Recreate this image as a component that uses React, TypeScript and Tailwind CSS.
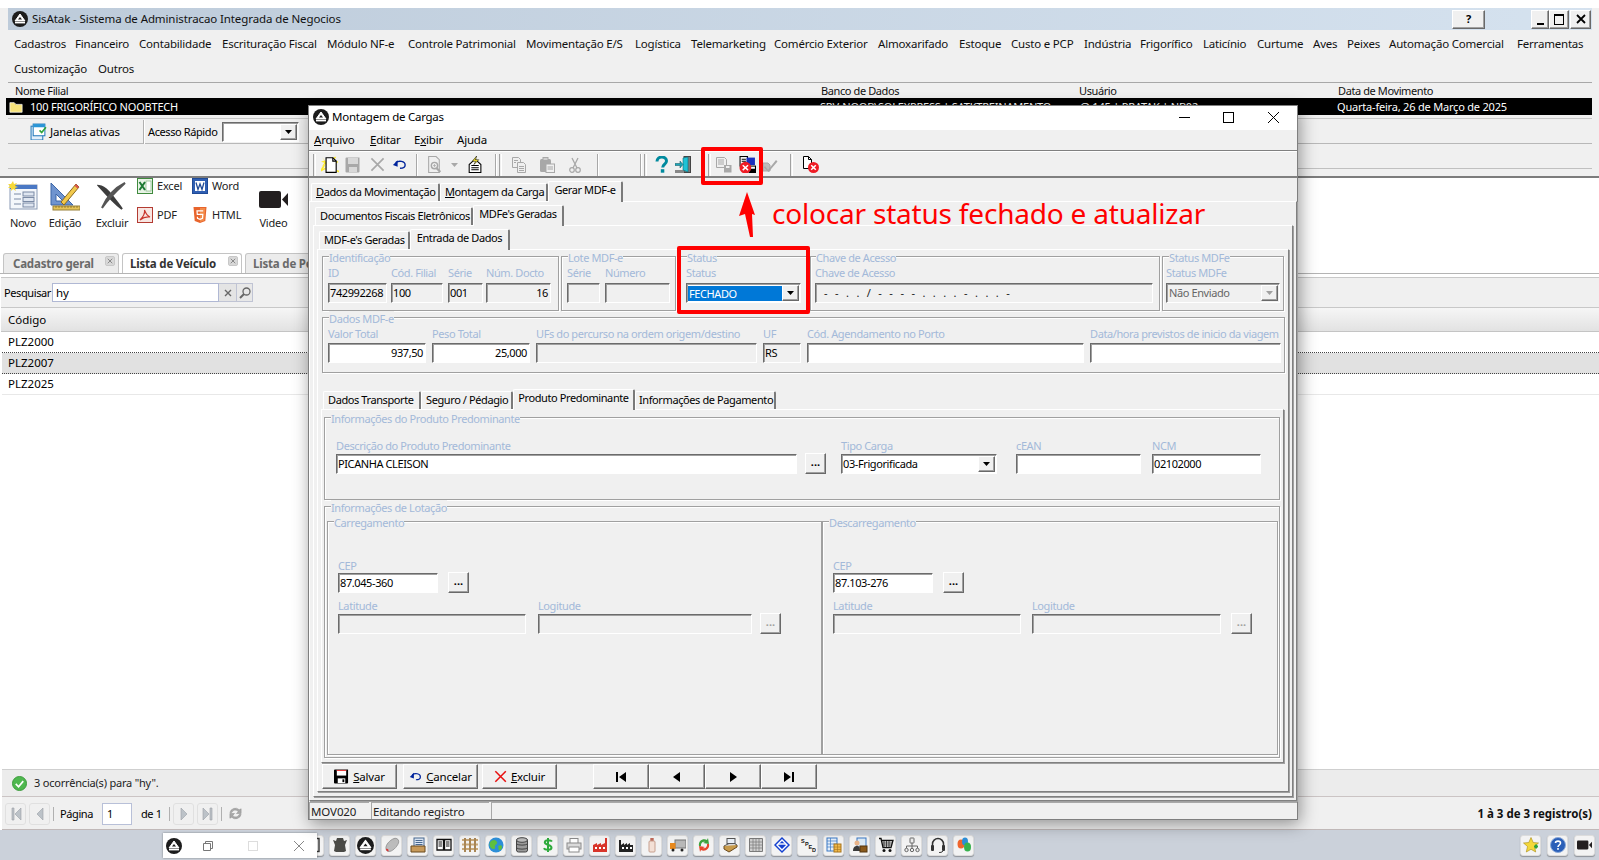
import React from 'react';

type P = { className?: string; children?: React.ReactNode };

const S = ({ className = 'w-4 h-4', children, v = '0 0 16 16' }: P & { v?: string }) => (
  <svg viewBox={v} className={`block shrink-0 ${className}`}>{children}</svg>
);

const Logo = ({ className = 'w-4 h-4' }: P) => (
  <S className={className}>
    <circle cx="8" cy="8" r="8" fill="#1c1c1c" />
    <path d="M8 3 L13 10 H3 Z" fill="#fff" stroke="#fff" strokeLinejoin="round" />
    <path d="M8 6 L10 8.6 H6 Z" fill="#1c1c1c" />
    <rect x="3" y="11" width="10" height="1.4" fill="#fff" />
  </S>
);

/* ---------- ribbon icons ---------- */
const NovoIcon = () => (
  <S v="0 0 30 30" className="w-[30px] h-[30px]">
    <rect x="2" y="4" width="27" height="24" fill="#f4f7fb" stroke="#8a9ab5" />
    <rect x="2" y="4" width="27" height="4" fill="#4a78c4" />
    <path d="M6 13h7M6 18h7M6 23h7" stroke="#7a8aa5" />
    <rect x="15" y="11" width="11" height="4" fill="#dfe6f1" stroke="#7a8aa5" />
    <rect x="15" y="16.500" width="11" height="4" fill="#dfe6f1" stroke="#7a8aa5" />
    <rect x="15" y="22" width="11" height="4" fill="#dfe6f1" stroke="#7a8aa5" />
    <path d="M5 0l1 3 3-1-2 3 3 1-3 1 1 3-3-2-2 2 0-3-3 0 2-2-2-2 3 0z" fill="#f6d93a" />
  </S>
);
const EdicaoIcon = () => (
  <S v="0 0 30 30" className="w-[30px] h-[30px]">
    <path d="M1 2 L1 24 L23 24 Z" fill="#6f94cf" stroke="#3d67a8" />
    <path d="M6 13 L6 20 L13 20 Z" fill="#fff" stroke="#3d67a8" />
    <path d="M11 21 L26 3 L29 6 L14 24 Z" fill="#f2c94c" stroke="#8a6a20" />
    <path d="M26 3 L29 6 L27.500 7.500 L24.500 4.800 Z" fill="#d9534f" />
    <rect x="3" y="25" width="27" height="4" fill="#e6c458" stroke="#97803a" />
    <path d="M6 25v2M9 25v2M12 25v2M15 25v2M18 25v2M21 25v2M24 25v2M27 25v2" stroke="#7a6520" strokeWidth=".7" />
  </S>
);
const ExcluirIcon = () => (
  <S v="0 0 30 30" className="w-[30px] h-[30px]">
    <path d="M2 5 C10 6 16 16 25 28 C17 22 10 14 2 5Z" fill="#3d3d3d" stroke="#3d3d3d" strokeWidth="2" />
    <path d="M28 2 C18 7 10 15 5 27 C9 21 17 12 28 2Z" fill="#6a6a6a" stroke="#555" strokeWidth="2" />
  </S>
);
const ExcelIcon = () => (
  <S className="w-4 h-4">
    <rect x=".5" y=".5" width="15" height="15" fill="#e8f3e6" stroke="#3f8a3d" />
    <rect x="9" y="3" width="5" height="10" fill="#fff" stroke="#6aa96a" strokeWidth=".6" />
    <path d="M2.500 4l5.500 8M8 4l-5.500 8" stroke="#1e7a35" strokeWidth="2" />
  </S>
);
const WordIcon = () => (
  <S className="w-4 h-4">
    <rect x=".5" y=".5" width="15" height="15" fill="#2f5fb3" stroke="#1f4a96" />
    <rect x="3" y="3" width="10" height="10" fill="#fff" />
    <path d="M4 4.500l2 7 2-5.500 2 5.500 2-7" stroke="#1f4a96" strokeWidth="1.300" fill="none" />
  </S>
);
const PdfIcon = () => (
  <S className="w-4 h-4">
    <rect x=".5" y=".5" width="15" height="15" fill="#f8e6e2" stroke="#b33b32" />
    <path d="M3 13 C6 10 8 6 7.500 3 C9 7 10.500 9 13 10 C9 9.500 6 10.500 3 13Z" fill="none" stroke="#c9342c" strokeWidth="1.100" />
  </S>
);
const HtmlIcon = () => (
  <S className="w-4 h-4">
    <path d="M1.500 0h13l-1.200 14L8 16l-5.300-2z" fill="#e8642c" />
    <path d="M8 1v14l4.300-1.600L13.300 1z" fill="#f28b4a" />
    <path d="M11.200 3.800H5l.3 3.500h5.500l-.3 4L8 12.300l-2.500-1-.1-1.500" fill="none" stroke="#fff" strokeWidth="1.200" />
  </S>
);
const VideoIcon = ({ className = 'w-[29px] h-[17px]' }: P) => (
  <S v="0 0 29 17" className={className}>
    <rect x="0" y="0" width="22" height="17" rx="2" fill="#231f20" />
    <path d="M23 8.500 L29 2 V15 Z" fill="#231f20" />
  </S>
);

/* ---------- toolbar icons ---------- */
const GR = '#a8a8a8';
const NewIco = () => (
  <S className="w-[18px] h-[18px]">
    <path d="M1 1l2 3-3 1 3 1-2 3 3-2 1 3 1-3" fill="#ffec2e" />
    <path d="M3 8L0 13l4-2M13 1l-3 2M15 5l-2 1M14 13l2 1" stroke="#ffec2e" strokeWidth="1.400" fill="none" />
    <path d="M4.500 1.500h6l3 3v10h-9z" fill="#fff" stroke="#000" />
    <path d="M10.500 1.500v3h3" fill="none" stroke="#000" />
  </S>
);
const SaveGrey = () => (
  <S className="w-4 h-4">
    <path d="M.5 1.500a1 1 0 0 1 1-1h13v14a1 1 0 0 1-1 1h-12a1 1 0 0 1-1-1z" fill={GR} />
    <rect x="3" y="1" width="10" height="6" fill="#d8d8d8" />
    <rect x="4" y="10" width="8" height="5" fill="#d8d8d8" />
  </S>
);
const XGrey = () => (
  <S className="w-[15px] h-[15px]">
    <path d="M1.500 1.500l13 13M14.500 1.500l-13 13" stroke={GR} strokeWidth="1.800" />
  </S>
);
const UndoIco = ({ className = 'w-[15px] h-[15px]' }: P) => (
  <S className={className}>
    <path d="M4 6 C7 3.500 14 4 14 8.500 C14 11 11.500 12 8.500 12" fill="none" stroke="#00249c" strokeWidth="1.500" />
    <path d="M1 8.500L6 3.500V10.500Z" fill="#00249c" />
  </S>
);
const PreviewGrey = () => (
  <S className="w-[17px] h-[17px]">
    <path d="M2.500 .5h7l3 3v12h-10z" fill="#f0f0f0" stroke={GR} />
    <circle cx="8" cy="9" r="3" fill="none" stroke={GR} strokeWidth="1.300" />
    <path d="M10 11.500l3.500 3.500" stroke={GR} strokeWidth="2" />
    <path d="M8 7.500v3M6.500 9h3" stroke={GR} strokeWidth=".7" />
  </S>
);
const ArrowGrey = () => (
  <S v="0 0 7 4" className="w-[7px] h-[4px]">
    <path d="M0 0h7L3.500 4z" fill={GR} />
  </S>
);
const DocBolt = () => (
  <S className="w-[17px] h-[17px]">
    <path d="M3 15.500V8L8.500 3 14 8v7.500z" fill="#fff" stroke="#000" />
    <path d="M5 9h7M5 11h7M5 13h7" stroke="#000" />
    <path d="M10 0L6 5h3L7.500 8l4.500-4.500H9z" fill="#ffec2e" stroke="#000" strokeWidth=".5" />
  </S>
);
const CopyGrey = () => (
  <S className="w-[16px] h-[16px]">
    <path d="M1.500 .5h6l2 2v8h-8z" fill="#efefef" stroke={GR} />
    <path d="M6.500 5.500h6l2 2v8h-8z" fill="#efefef" stroke={GR} />
    <path d="M3 3.500h4M3 5.500h2M8 9.500h5M8 11.500h5M8 13.500h5" stroke={GR} />
  </S>
);
const PasteGrey = () => (
  <S className="w-[16px] h-[16px]">
    <rect x="1" y="2" width="11" height="13" rx="1.500" fill={GR} />
    <rect x="4" y=".5" width="5" height="3" fill="#cfcfcf" stroke={GR} />
    <rect x="7" y="7" width="8.500" height="8.500" fill="#f0f0f0" stroke={GR} />
    <path d="M8.500 10h5.500M8.500 12h5.500" stroke={GR} />
  </S>
);
const CutGrey = () => (
  <S className="w-[12px] h-[16px]" v="0 0 12 16">
    <path d="M3 1l5 10M9 1L4 11" stroke={GR} strokeWidth="1.300" />
    <circle cx="3" cy="13" r="2.300" fill="none" stroke={GR} strokeWidth="1.200" />
    <circle cx="9" cy="13" r="2.300" fill="none" stroke={GR} strokeWidth="1.200" />
  </S>
);
const HelpIco = () => (
  <S className="w-[15px] h-[17px]" v="0 0 15 17">
    <path d="M3 5.500C3 2.500 5.500 1 7.800 1 10.500 1 12.500 2.800 12.500 5c0 3-3.800 3.200-3.800 6.500" fill="none" stroke="#008a9e" strokeWidth="3" />
    <rect x="6.800" y="13.200" width="3.500" height="3.500" fill="#008a9e" />
  </S>
);
const ExitIco = () => (
  <S className="w-[16px] h-[17px]" v="0 0 16 17">
    <rect x="9" y=".5" width="6.500" height="16" fill="#7a7a7a" stroke="#444" />
    <rect x="0" y="14" width="9" height="3" fill="#888" />
    <path d="M8 2l5-1v15l-5-2z" fill="#1fc2d6" stroke="#0a6b78" strokeWidth=".6" />
    <path d="M0 7.500h5V5l3 3.500L5 12V9.500H0z" fill="#1fa5b8" stroke="#08545f" strokeWidth=".5" />
  </S>
);
const DocsGrey = () => (
  <S className="w-[16px] h-[16px]">
    <path d="M.5 .5h8l2 2v8h-10z" fill="#efefef" stroke={GR} />
    <path d="M2 3h6M2 5h6M2 7h6" stroke={GR} />
    <rect x="8" y="8" width="7.500" height="7.500" fill={GR} />
    <rect x="10" y="9" width="3.500" height="2" fill="#eee" />
  </S>
);
const DocsRed = () => (
  <S className="w-[17px] h-[17px]">
    <rect x="1" y=".5" width="7" height="9" fill="#fff" stroke="#000" />
    <path d="M2.500 3h4M2.500 5h4" stroke="#000" />
    <rect x="7" y="1.500" width="8" height="7" fill="#1a2fbe" />
    <rect x="9" y="9" width="7.500" height="7.500" fill="#000" />
    <rect x="11" y="10" width="4" height="2" fill="#fff" />
    <circle cx="6" cy="11" r="5.500" fill="#ee1c25" />
    <path d="M3.500 8.700l5 4.600M8.500 8.700l-5 4.600" stroke="#fff" strokeWidth="1.400" />
  </S>
);
const CheckGrey = () => (
  <S className="w-[16px] h-[16px]">
    <path d="M1 6h5l2 2v6H1z" fill="#bdbdbd" stroke={GR} />
    <path d="M3 9l3 4 8-10 1.500 1.500L6.500 15 2 10.500z" fill={GR} />
  </S>
);
const DocX = () => (
  <S className="w-[17px] h-[17px]" v="0 0 17 17">
    <path d="M1.500 .5h5l3 3v9h-8z" fill="#fff" stroke="#000" />
    <path d="M6.500 .5v3h3" fill="none" stroke="#000" />
    <circle cx="11.500" cy="11.500" r="5.500" fill="#ee1c25" />
    <path d="M9.200 9.200l4.600 4.600M13.800 9.200l-4.600 4.600" stroke="#fff" strokeWidth="1.500" />
  </S>
);
const Grip = () => <div className="w-[3px] h-[22px] border-l border-l-[#a0a0a0] border-r border-r-white shrink-0" />;
const Sep = () => <div className="w-[2px] h-[22px] border-l border-l-[#a8a8a8] border-r border-r-white shrink-0" />;

/* ---------- taskbar icons ---------- */
const TB: React.ReactNode[] = [
  <S key="0"><rect x="3" y="1.500" width="10" height="13" fill="none" stroke="#333" strokeWidth="1.400" /></S>,
  <S key="1"><path d="M1 3l3 1 1-3h6l1 3 3-1-2 5 1 6-2 1H4l-2-1 1-6z" fill="#4a4a46" /></S>,
  <Logo key="2" className="w-[17px] h-[17px]" />,
  <S key="3"><path d="M2 12C1 8 6 3 10 1.500 13 .5 15.500 3 14.500 6 13 10 8 15 4.500 14.500 3 14.300 2.300 13.300 2 12z" fill="#bcbcbc" stroke="#777" strokeWidth=".6" /><path d="M2 12c0 1.300 1.200 2.500 2.500 2.500.3-2-.7-3-2.500-2.500z" fill="#d33" /></S>,
  <S key="4"><rect x="4" y="1" width="10" height="10" fill="#dbe6f4" stroke="#4a6a92" /><path d="M5.500 3.500h7M5.500 5.500h7M5.500 7.500h7" stroke="#4a6a92" /><path d="M1 9h14v6H1z" fill="#c89a5a" stroke="#6b4a1e" /></S>,
  <S key="5"><path d="M1 2.500h6.500v10.500H1zM8.500 2.500H15v10.500H8.500z" fill="#fff" stroke="#111" strokeWidth="1.300" /><path d="M2.500 5h3.500M2.500 7h3.500M2.500 9h3.500M10 5h3.500M10 7h3.500M10 9h3.500" stroke="#111" /></S>,
  <S key="6"><path d="M0 3h16M0 7.500h16M0 12h16" stroke="#c8a878" strokeWidth="2.200" /><path d="M3 1v14M8 1v14M13 1v14" stroke="#a98655" strokeWidth="2" /></S>,
  <S key="7"><circle cx="8" cy="8" r="7.500" fill="#2d8fd8" /><path d="M3 4c3-2 5-1 6 1S6 8 7 10s-2 3-4 1-2-5 0-7zM10 9c2-1 4-1 4 1s-2 4-3 3 0-2-1-4z" fill="#5fbf3e" /></S>,
  <S key="8"><rect x="2.500" y="2" width="11" height="13" rx="2" fill="#9a9a9a" stroke="#444" /><ellipse cx="8" cy="3" rx="5.500" ry="2.300" fill="#bbb" stroke="#444" /><path d="M2.500 7c2 1.500 9 1.500 11 0M2.500 11c2 1.500 9 1.500 11 0" stroke="#444" fill="none" /></S>,
  <S key="9"><path d="M12 4.500C11 3 5 2.500 4.800 5.300 4.600 8 11.500 7.500 11.500 10.700 11.500 13.500 5 13.300 3.800 11.300M8 1v14" stroke="#2eaa3c" strokeWidth="2" fill="none" /></S>,
  <S key="10"><rect x="4" y="1.500" width="8" height="5" fill="#fff" stroke="#8a8a8a" /><rect x="1" y="6" width="14" height="6" fill="#dadada" stroke="#8a8a8a" /><rect x="3" y="10" width="10" height="5" fill="#fff" stroke="#8a8a8a" /></S>,
  <S key="11"><path d="M1 15V8l4-2v2l4-2v2l4-2V1h2v14z" fill="#d8352a" /><path d="M3 11h2M7 11h2M11 11h2" stroke="#fff" strokeWidth="2" /></S>,
  <S key="12"><path d="M1 15V3h2v5l3-2v2l3-2v2l3-2v2h3v7z" fill="#222" /><path d="M4 11h2M8 11h2M12 11h2" stroke="#fff" strokeWidth="2" /></S>,
  <S key="13"><rect x="6.300" y="1" width="3.400" height="3" fill="#c06a5a" /><rect x="5" y="4" width="6" height="11" rx="1" fill="#f3e0d6" stroke="#c7a08f" /></S>,
  <S key="14"><rect x="5" y="3" width="11" height="8" fill="#b8b8b8" stroke="#777" /><rect x="0" y="6" width="5.500" height="6" fill="#e8891c" /><circle cx="3" cy="13" r="1.500" fill="#222" /><circle cx="12" cy="13" r="1.500" fill="#222" /></S>,
  <S key="15"><path d="M3 9C2 4 7 1 11 3l1-2 1 6-6-1 2-1C7 4 4.500 6 5 9z" fill="#3fa33f" /><path d="M13 7c1 5-4 8-8 6l-1 2-1-6 6 1-2 1c2 1 4.500-1 4-4z" fill="#e8452c" /></S>,
  <S key="16"><path d="M2 9l8-4 5 3-8 5z" fill="#d8d8d8" stroke="#555" /><rect x="5" y="1.500" width="8" height="5" fill="#e9f0f8" stroke="#555" /><path d="M2 9v3l5 3 8-5V8" fill="#c79a4a" stroke="#6b4a1e" /></S>,
  <S key="17"><path d="M1.500 1.500h13v13h-13z" fill="#d0d0d0" stroke="#7a7a7a" /><path d="M1.500 5h13M1.500 8h13M1.500 11h13M5 1.500v13M8 1.500v13M11 1.500v13" stroke="#7a7a7a" strokeWidth=".7" /></S>,
  <S key="18"><path d="M8 0l8 8-8 8-8-8z" fill="#1340d0" /><path d="M8 3L13 8 8 13 3 8z" fill="none" stroke="#fff" strokeWidth="1.400" /><path d="M4 7h8" stroke="#fff" strokeWidth="1.400" /></S>,
  <S key="19"><text x="1" y="6" fontSize="5.500" fontFamily="'Liberation Sans',sans-serif" fontWeight="700" fill="#111">S</text><text x="5" y="8.500" fontSize="5.500" fontFamily="'Liberation Sans',sans-serif" fontWeight="700" fill="#111">P</text><text x="8.500" y="11.500" fontSize="5.500" fontFamily="'Liberation Sans',sans-serif" fontWeight="700" fill="#111">E</text><text x="12" y="15" fontSize="5.500" fontFamily="'Liberation Sans',sans-serif" fontWeight="700" fill="#111">D</text></S>,
  <S key="20"><rect x="1" y="1" width="10" height="13" fill="#e3eefa" stroke="#3a78c4" /><path d="M1 4h10M1 7h10M1 10h10M4.500 1v13" stroke="#3a78c4" strokeWidth=".7" /><rect x="8" y="7" width="7" height="8" fill="#f0b84a" stroke="#a8751c" /><path d="M8 10h7M8 12.500h7M11.500 7v8" stroke="#a8751c" strokeWidth=".6" /></S>,
  <S key="21"><rect x="5" y="1" width="9" height="9" fill="#dcebf7" stroke="#3a78c4" /><circle cx="5" cy="6" r="2.500" fill="#e8b48a" /><path d="M1 14c0-4 2-5 4-5s3 1 3 5z" fill="#3a3a3a" /><rect x="8" y="9" width="7" height="6" fill="#8a5a1c" stroke="#553610" /></S>,
  <S key="22"><path d="M1 1.500h2l2 9h8l2-7H4" fill="none" stroke="#111" strokeWidth="1.300" /><path d="M6 4v6M8.500 4v6M11 4v6M4.500 6h9.500M5 8h9" stroke="#111" strokeWidth=".7" /><circle cx="6" cy="13.500" r="1.500" fill="#111" /><circle cx="12" cy="13.500" r="1.500" fill="#111" /></S>,
  <S key="23"><rect x="6" y="1" width="4" height="5" rx=".5" fill="#eee" stroke="#666" /><path d="M8 6v3M2.500 9h11M2.500 9v2M8 9v2M13.500 9v2" stroke="#666" fill="none" /><circle cx="2.500" cy="13" r="1.700" fill="#eee" stroke="#666" /><circle cx="8" cy="13" r="1.700" fill="#eee" stroke="#666" /><circle cx="13.500" cy="13" r="1.700" fill="#eee" stroke="#666" /></S>,
  <S key="24"><path d="M2.500 10V7a5.500 5.500 0 0 1 11 0v3" fill="none" stroke="#333" strokeWidth="1.500" /><rect x="1" y="8" width="3" height="6" rx="1" fill="#333" /><rect x="12" y="8" width="3" height="6" rx="1" fill="#333" /><path d="M13 14c-1 1.500-3 1.500-4 1.500" fill="none" stroke="#333" /></S>,
  <S key="25"><ellipse cx="5" cy="7" rx="3.500" ry="4.500" fill="#f0662e" /><ellipse cx="9" cy="4.500" rx="3" ry="4" fill="#2d8fd8" /><ellipse cx="11.500" cy="10" rx="3.500" ry="4.500" fill="#37b24d" /></S>,
];
const Tbtn = ({ children }: P) => (
  <div className="w-[21px] h-[21px] rounded-[3px] bg-[#f3f3f3] border border-[#dcdcdc] shadow-[0_1px_1px_rgba(0,0,0,0.3)] flex items-center justify-center shrink-0">{children}</div>
);

/* ---------- widgets ---------- */
const sunk = 'border border-t-[#6b6b6b] border-l-[#6b6b6b] border-r-white border-b-white shadow-[inset_1px_1px_0_#a0a0a0]';
const raised = 'border border-t-white border-l-white border-r-[#696969] border-b-[#696969] shadow-[inset_-1px_-1px_0_#a0a0a0]';

const Inp = ({ className = '', children, off }: P & { off?: boolean }) => (
  <div className={`h-[20px] flex items-center pl-[1px] pr-[2px] whitespace-nowrap overflow-hidden ${off ? 'bg-[#f0f0f0]' : 'bg-white'} ${sunk} ${className}`}>{children}</div>
);
const Lab = ({ children, className = '' }: P) => <div className={`h-[13px] leading-[13px] text-[#a3b9d9] whitespace-nowrap ${className}`}>{children}</div>;
const Field = ({ label, className = '', children, off, right, gap = 'mb-[1px]' }: P & { label: string; off?: boolean; right?: boolean; gap?: string }) => (
  <div className={`shrink-0 flex flex-col ${className}`}>
    <Lab className={gap}>{label}</Lab>
    <Inp off={off} className={right ? 'justify-end' : ''}>{children}</Inp>
  </div>
);
const Group = ({ legend, className = '', legendClass = 'ml-[6px]', children }: P & { legend: string; legendClass?: string }) => (
  <fieldset className={`shrink-0 border border-[#a0a0a0] shadow-[inset_1px_1px_0_#fff,1px_1px_0_#fff] ${className}`}>
    <legend className={`${legendClass} h-[13px] leading-[15px] text-[#a3b9d9] bg-[#f0f0f0] whitespace-nowrap`}>{legend}</legend>
    {children}
  </fieldset>
);
const Tri = ({ off }: { off?: boolean }) => (
  <div className={`w-[17px] h-[16px] shrink-0 bg-[#f0f0f0] ${raised} flex items-center justify-center`}>
    <S v="0 0 7 4" className="w-[7px] h-[4px]"><path d="M0 0h7L3.500 4z" fill={off ? '#a0a0a0' : '#000'} /></S>
  </div>
);
const Dots = ({ off, className = '' }: P & { off?: boolean }) => (
  <div className={`w-[21px] h-[21px] shrink-0 self-end bg-[#f0f0f0] ${raised} flex items-center justify-center tracking-normal ${off ? 'text-[#a0a0a0]' : 'text-black'} font-bold leading-[12px] pb-[3px] ${className}`}>...</div>
);
const Tab = ({ children, active, className = '' }: P & { active?: boolean }) => (
  <div className={`flex items-center whitespace-nowrap bg-[#f0f0f0] border-t border-l border-t-white border-l-white border-r-2 border-r-[#7a7a7a] rounded-t-[2px] ${active ? 'h-[21px] pb-[5px] justify-center z-10' : 'h-[19px] pb-[3px]'} ${className}`}>{children}</div>
);
const Page = ({ className = '', children }: P) => (
  <div className={`border-t border-t-white border-l border-l-white border-r border-r-[#808080] border-b border-b-[#808080] shadow-[1px_1px_0_#a0a0a0] ${className}`}>{children}</div>
);
const U = ({ children }: P) => <span className="underline underline-offset-1">{children}</span>;

const Pbtn = ({ children }: P) => (
  <div className="w-[21px] h-[22px] rounded-[3px] border border-[#e0e0e0] flex items-center justify-center">{children}</div>
);
const NavIco = ({ d }: { d: string }) => (
  <S v="0 0 12 10" className="w-[12px] h-[10px]"><path d={d} fill="#000" /></S>
);
const PgIco = ({ d }: { d: string }) => (
  <S v="0 0 12 14" className="w-[12px] h-[14px]"><path d={d} fill="#bcc2c8" stroke="#9aa0a6" strokeWidth=".6" /></S>
);

const MENU = [
  ['Cadastros', 'w-[61px]'], ['Financeiro', 'w-[64px]'], ['Contabilidade', 'w-[83px]'], ['Escrituração Fiscal', 'w-[105px]'],
  ['Módulo NF-e', 'w-[81px]'], ['Controle Patrimonial', 'w-[118px]'], ['Movimentação E/S', 'w-[109px]'], ['Logística', 'w-[56px]'],
  ['Telemarketing', 'w-[83px]'], ['Comércio Exterior', 'w-[104px]'], ['Almoxarifado', 'w-[81px]'], ['Estoque', 'w-[52px]'],
  ['Custo e PCP', 'w-[73px]'], ['Indústria', 'w-[56px]'], ['Frigorífico', 'w-[63px]'], ['Laticínio', 'w-[54px]'],
  ['Curtume', 'w-[56px]'], ['Aves', 'w-[34px]'], ['Peixes', 'w-[42px]'], ['Automação Comercial', 'w-[128px]'], ['Ferramentas', 'w-[70px]'],
];

const RibbonSmall = ({ icon, text, className = '' }: P & { icon: React.ReactNode; text: string }) => (
  <div className={`flex items-center gap-[4px] h-[16px] ${className}`}>{icon}<span>{text}</span></div>
);
const RibbonBig = ({ icon, text, className = '' }: P & { icon: React.ReactNode; text: string }) => (
  <div className={`flex flex-col items-center shrink-0 ${className}`}>
    <div className="h-[33px] flex items-end">{icon}</div>
    <div className="mt-[5px] leading-[14px]">{text}</div>
  </div>
);

export default function App() {
  return (
    <div className="relative w-[1599px] h-[860px] overflow-hidden bg-white flex flex-col text-black text-[11px] tracking-[-0.4px] leading-[14px] font-['Noto_Sans','Liberation_Sans',sans-serif]">
      {/* main window header */}
      <div className="h-[178px] shrink-0 flex flex-col bg-[#f0f0f0] border-b-2 border-b-[#7c7c7c] pl-[3px] pr-[7px]">
        <div className="h-[8px] -mx-[3px] -mr-[7px] bg-white shrink-0" />
        <div className="ml-[5px] h-[22px] flex items-center bg-gradient-to-r from-[#bdcbda] to-[#d5e2ef] shrink-0">
          <Logo className="ml-[4px] w-4 h-4" />
          <span className="ml-[4px] text-[11.5px] tracking-[-0.1px] text-[#111] whitespace-nowrap">SisAtak - Sistema de Administracao Integrada de Negocios</span>
          <div className={`ml-auto w-[33px] h-[19px] flex items-center justify-center font-bold bg-[#f0f0f0] ${raised}`}>?</div>
          <div className={`ml-[46px] w-[18px] h-[19px] flex items-end justify-center pb-[3px] bg-[#f0f0f0] ${raised}`}><div className="w-[7px] h-[2px] bg-black" /></div>
          <div className={`w-[20px] h-[19px] flex items-center justify-center bg-[#f0f0f0] ${raised}`}><div className="w-[10px] h-[11px] border border-black border-t-2" /></div>
          <div className={`ml-[1px] mr-[1px] w-[21px] h-[19px] flex items-center justify-center bg-[#f0f0f0] ${raised}`}>
            <S v="0 0 10 10" className="w-[10px] h-[10px]"><path d="M1 1l8 8M9 1l-8 8" stroke="#000" strokeWidth="1.800" /></S>
          </div>
        </div>
        <div className="ml-[11px] h-[52px] shrink-0 flex flex-col text-[11.5px] tracking-[-0.2px] text-[#111]">
          <div className="h-[27px] flex items-center whitespace-nowrap">
            {MENU.map(([t, w]) => <span key={t} className={`shrink-0 ${w}`}>{t}</span>)}
          </div>
          <div className="h-[24px] flex items-center whitespace-nowrap">
            <span className="w-[84px]">Customização</span><span>Outros</span>
          </div>
        </div>
        <div className="ml-[5px] border-t border-t-[#a8a8a8] h-[16px] shrink-0 flex items-center text-[#111]">
          <span className="ml-[7px] w-[806px]">Nome Filial</span>
          <span className="w-[258px]">Banco de Dados</span>
          <span className="w-[259px]">Usuário</span>
          <span>Data de Movimento</span>
        </div>
        <div className="ml-[3px] h-[17px] shrink-0 bg-black text-white tracking-[-0.2px] flex items-center whitespace-nowrap">
          <S className="w-[14px] h-[14px] ml-[3px]"><path d="M1 3h5l2 2h7v9H1z" fill="#f6e27a" stroke="#fff" strokeWidth=".8" /></S>
          <span className="ml-[7px] w-[790px]">100 FRIGORÍFICO NOOBTECH</span>
          <span className="w-[260px]">SRV-NOOB\SQLEXPRESS | SATKTREINAMENTO</span>
          <span className="w-[257px]">@ 145 | PRATAK | NB02</span>
          <span>Quarta-feira, 26 de Março de 2025</span>
        </div>
        <div className="ml-[5px] mt-[3px] border-t border-t-[#c8c8c8] border-b border-b-[#b8b8b8] h-[26px] shrink-0 flex items-center pt-[1px]">
          <S className="ml-[22px] w-[17px] h-[17px]">
            <rect x="1" y="3" width="11" height="13" fill="#e3f0fb" stroke="#2a7dbd" />
            <rect x="3" y="1" width="11" height="11" fill="#fff" stroke="#2a7dbd" />
            <rect x="3" y="1" width="11" height="3" fill="#2a95d6" />
            <path d="M9 7l2 2 4-5" stroke="#2fa33a" strokeWidth="1.500" fill="none" />
          </S>
          <span className="ml-[3px] text-[11.5px] tracking-[-0.2px] w-[93px]"><U>J</U>anelas ativas</span>
          <div className="w-[2px] h-[24px] border-l border-l-[#b0b0b0] border-r border-r-white" />
          <span className="ml-[3px] w-[74px] whitespace-nowrap">Acesso Rápido</span>
          <div className={`w-[77px] h-[20px] flex items-center justify-end pr-[1px] bg-white ${sunk}`}><Tri /></div>
        </div>
        <div className="ml-[5px] h-[25px] shrink-0 border-b border-b-[#c0c0c0]" />
      </div>

      {/* ribbon */}
      <div className="h-[75px] shrink-0 flex pl-[8px] text-[#222] tracking-[-0.2px]">
        <RibbonBig icon={<NovoIcon />} text="Novo" className="w-[30px]" />
        <RibbonBig icon={<EdicaoIcon />} text="Edição" className="ml-[12px] w-[30px]" />
        <RibbonBig icon={<ExcluirIcon />} text="Excluir" className="ml-[17px] w-[30px]" />
        <div className="ml-[10px] w-[55px] shrink-0 flex flex-col gap-[13px]">
          <RibbonSmall icon={<ExcelIcon />} text="Excel" />
          <RibbonSmall icon={<PdfIcon />} text="PDF" />
        </div>
        <div className="w-[67px] shrink-0 flex flex-col gap-[13px]">
          <RibbonSmall icon={<WordIcon />} text="Word" />
          <RibbonSmall icon={<HtmlIcon />} text="HTML" />
        </div>
        <div className="w-[29px] shrink-0 flex flex-col items-center">
          <div className="h-[30px] flex items-end"><VideoIcon /></div>
          <div className="mt-[8px] leading-[14px]">Video</div>
        </div>
      </div>

      {/* tab strip */}
      <div className="h-[21px] shrink-0 flex items-end pl-[3px] gap-[3px] border-b border-b-[#b4b4b4] font-bold text-[11.5px] tracking-[-0.2px]">
        <div className="w-[116px] h-[20px] flex items-center pl-[9px] rounded-t-[3px] border border-b-0 border-[#c4c4c4] bg-[#ececec] text-[#6a6a6a] relative">
          Cadastro geral
          <span className="absolute right-[3px] top-[2px] w-[10px] h-[10px] rounded-[2px] bg-[#d8d8d8] border border-[#c8c8c8] flex items-center justify-center"><S v="0 0 8 8" className="w-[6px] h-[6px]"><path d="M1 1l6 6M7 1L1 7" stroke="#888" strokeWidth="1.300" /></S></span>
        </div>
        <div className="w-[120px] h-[20px] flex items-center pl-[7px] rounded-t-[3px] border border-b-0 border-[#c4c4c4] bg-white text-[#333] relative">
          Lista de Veículo
          <span className="absolute right-[3px] top-[2px] w-[10px] h-[10px] rounded-[2px] bg-[#d8d8d8] border border-[#c8c8c8] flex items-center justify-center"><S v="0 0 8 8" className="w-[6px] h-[6px]"><path d="M1 1l6 6M7 1L1 7" stroke="#888" strokeWidth="1.300" /></S></span>
        </div>
        <div className="w-[120px] h-[20px] flex items-center pl-[7px] rounded-t-[3px] border border-b-0 border-[#c4c4c4] bg-[#ececec] text-[#6a6a6a] whitespace-nowrap">Lista de Peças</div>
      </div>

      {/* search */}
      <div className="mt-[3px] ml-[1px] h-[31px] shrink-0 bg-[#f0f0f0] border-y border-[#c8c8c8] flex items-center pl-[3px]">
        <span className="w-[48px]">Pesquisar</span>
        <div className="w-[167px] h-[19px] bg-white border border-[#b0b8d4] flex items-center pl-[3px] text-[11.5px] tracking-normal">hy</div>
        <div className="w-[17px] h-[19px] bg-[#e4e4e4] border-y border-[#c0c4d4] flex items-center justify-center"><S v="0 0 8 8" className="w-[8px] h-[8px]"><path d="M1 1l6 6M7 1L1 7" stroke="#666" strokeWidth="1.400" /></S></div>
        <div className="w-[17px] h-[19px] bg-[#e8e8e8] border border-[#c0c4d4] flex items-center justify-center"><S v="0 0 12 12" className="w-[12px] h-[12px]"><circle cx="7.500" cy="4.500" r="3.500" fill="none" stroke="#666" strokeWidth="1.300" /><path d="M5 7L1 11" stroke="#666" strokeWidth="2" /></S></div>
      </div>
      <div className="ml-[1px] h-[24px] shrink-0 flex items-center pl-[7px] bg-gradient-to-b from-[#f6f6f6] to-[#e2e2e2] border-b border-b-[#c4c4c4] text-[11.5px] tracking-normal">Código</div>
      <div className="ml-[2px] h-[21px] shrink-0 flex items-center pl-[6px] border-b border-dotted border-b-[#444] text-[11.5px] tracking-normal">PLZ2000</div>
      <div className="ml-[2px] h-[21px] shrink-0 flex items-center pl-[6px] bg-[#e1e1e1] border-b border-dotted border-b-[#444] text-[11.5px] tracking-normal">PLZ2007</div>
      <div className="ml-[2px] h-[21px] shrink-0 flex items-center pl-[6px] border-b border-b-[#e8e8e8] text-[11.5px] tracking-normal">PLZ2025</div>
      <div className="flex-1" />

      {/* bottom bars */}
      <div className="ml-[2px] h-[28px] shrink-0 bg-[#ececec] border-t border-t-[#cfcfcf] border-b border-b-[#cbc4c4] flex items-center pl-[10px]">
        <S className="w-[15px] h-[15px]"><circle cx="8" cy="8" r="7.500" fill="#4fb84f" stroke="#3a9a3a" /><path d="M4 8.500l3 3 5-6" stroke="#fff" strokeWidth="1.800" fill="none" /></S>
        <span className="ml-[7px] text-[#222] tracking-[-0.2px]">3 ocorrência(s) para "hy".</span>
      </div>
      <div className="ml-[2px] h-[33px] shrink-0 bg-[#f0f0f0] border-b border-b-[#c0b8b8] flex items-center pl-[3px] pr-[7px] pt-[1px]">
        <Pbtn><PgIco d="M2 1h2v12H2zM11 1v12L5 7z" /></Pbtn>
        <div className="ml-[3px]"><Pbtn><PgIco d="M9 1v12L3 7z" /></Pbtn></div>
        <div className="ml-[3px] w-px h-[14px] bg-[#b0b0b0]" />
        <span className="ml-[6px] w-[42px]">Página</span>
        <div className="w-[30px] h-[22px] bg-white border border-[#b8c0d8] flex items-center pl-[4px]">1</div>
        <span className="ml-[9px] w-[28px]">de 1</span>
        <div className="w-px h-[14px] bg-[#b0b0b0]" />
        <div className="ml-[3px]"><Pbtn><PgIco d="M3 1v12l6-6z" /></Pbtn></div>
        <div className="ml-[3px]"><Pbtn><PgIco d="M1 1v12l6-6zM8 1h2v12H8z" /></Pbtn></div>
        <div className="ml-[3px] w-px h-[14px] bg-[#b0b0b0]" />
        <S className="ml-[6px] w-[15px] h-[15px]"><path d="M2 7a6 6 0 0 1 10-3l2-1v5H9l2-2A4 4 0 0 0 4 7zM14 9a6 6 0 0 1-10 3l-2 1V8h5L5 10a4 4 0 0 0 7-1z" fill="#a8a8a8" stroke="#8a8a8a" strokeWidth=".5" /></S>
        <span className="ml-auto font-bold text-[#111] text-[11.5px] tracking-normal">1 à 3 de 3 registro(s)</span>
      </div>
      <div className="h-[30px] shrink-0 bg-[#cbd1da] flex items-center pl-[303px] pr-[4px] gap-[5px]">
        {TB.map((ic, i) => <Tbtn key={i}>{ic}</Tbtn>)}
        <div className="ml-auto flex gap-[6px]">
          <Tbtn><S><path d="M8 .5l2.200 5 5.300.5-4 3.500 1.200 5.500L8 12.300 3.300 15l1.200-5.500-4-3.500 5.300-.5z" fill="#f4d83a" stroke="#a88a10" strokeWidth=".6" /><path d="M11 9.500h4M13 7.500v4" stroke="#2fa33a" strokeWidth="2" /></S></Tbtn>
          <Tbtn><S><circle cx="8" cy="8" r="7.500" fill="#2a5fb8" stroke="#8aa8d8" /><path d="M5.500 6C5.500 3.500 10.500 3.500 10.500 6 10.500 8 8 8 8 10" stroke="#fff" strokeWidth="1.600" fill="none" /><rect x="7.200" y="11" width="1.600" height="1.800" fill="#fff" /></S></Tbtn>
          <Tbtn><VideoIcon className="w-[15px] h-[10px]" /></Tbtn>
        </div>
      </div>

      {/* minimised window */}
      <div className="absolute left-[163px] top-[833px] w-[154px] h-[25px] bg-white flex items-center shadow-[0_0_2px_rgba(0,0,0,0.4)]">
        <Logo className="ml-[3px] w-4 h-4" />
        <S v="0 0 10 10" className="ml-[21px] w-[10px] h-[10px]"><path d="M.5 2.500h7v7h-7zM2.500 2.500v-2h7v7h-2" fill="none" stroke="#777" /></S>
        <div className="ml-[35px] w-[10px] h-[10px] border border-[#ddd]" />
        <S v="0 0 10 10" className="ml-[36px] w-[10px] h-[10px]"><path d="M0 0l10 10M10 0L0 10" stroke="#888" /></S>
      </div>

      {/* dialog */}
      <div className="absolute left-[308px] top-[105px] w-[990px] h-[715px] flex flex-col bg-[#f0f0f0] border border-[#7f7f7f] shadow-[2px_4px_16px_rgba(0,0,0,0.4)]">
        <div className="h-[24px] shrink-0 bg-white flex items-center pb-[2px]">
          <Logo className="ml-[4px] w-4 h-4" />
          <span className="ml-[3px] text-[11.5px] tracking-[-0.25px]">Montagem de Cargas</span>
          <div className="ml-auto w-[11px] h-px bg-black mr-[33px]" />
          <div className="w-[11px] h-[11px] border border-black mr-[34px]" />
          <S v="0 0 11 11" className="w-[11px] h-[11px] mr-[18px]"><path d="M0 0l11 11M11 0L0 11" stroke="#000" /></S>
        </div>
        <div className="h-[21px] shrink-0 flex items-center text-[11.5px] tracking-[-0.2px] pl-[5px] border-b border-b-[#808080]">
          <span className="w-[56px]"><U>A</U>rquivo</span>
          <span className="w-[44px]"><U>E</U>ditar</span>
          <span className="w-[43px]">E<U>x</U>ibir</span>
          <span>A<U>j</U>uda</span>
        </div>
        <div className="h-[27px] shrink-0 flex items-center pl-[4px] pt-[1px] border-b-2 border-b-[#808080] border-t border-t-white">
          <Grip />
          <div className="ml-[5px]"><NewIco /></div>
          <div className="ml-[6px]"><SaveGrey /></div>
          <div className="ml-[9px]"><XGrey /></div>
          <div className="ml-[7px]"><UndoIco /></div>
          <div className="ml-[9px]"><Sep /></div>
          <div className="ml-[8px]"><PreviewGrey /></div>
          <div className="ml-[8px]"><ArrowGrey /></div>
          <div className="ml-[8px]"><DocBolt /></div>
          <div className="ml-[12px]"><Sep /></div>
          <div className="ml-[2px]"><Grip /></div>
          <div className="ml-[9px]"><CopyGrey /></div>
          <div className="ml-[12px]"><PasteGrey /></div>
          <div className="ml-[14px]"><CutGrey /></div>
          <div className="ml-[16px]"><Sep /></div>
          <div className="ml-[41px]"><Sep /></div>
          <div className="ml-[2px]"><Grip /></div>
          <div className="ml-[7px]"><HelpIco /></div>
          <div className="ml-[6px]"><ExitIco /></div>
          <div className="ml-[17px]"><Grip /></div>
          <div className="ml-[5px]"><DocsGrey /></div>
          <div className="ml-[7px]"><DocsRed /></div>
          <div className="ml-[6px]"><CheckGrey /></div>
          <div className="ml-[12px]"><Grip /></div>
          <div className="ml-[9px]"><DocX /></div>
        </div>

        {/* tabs level 1 */}
        <div className="h-[24px] shrink-0 flex items-end pl-[2px] -mb-px">
          <Tab className="w-[129px] pl-[4px]"><U>D</U>ados da Movimentação</Tab>
          <Tab className="w-[108px] pl-[4px]"><U>M</U>ontagem da Carga</Tab>
          <Tab active className="w-[75px]">Gerar MDF-e</Tab>
        </div>
        <Page className="h-[600px] shrink-0 flex flex-col">
          <div className="h-[24px] shrink-0 flex items-end pl-[5px] -mb-px">
            <Tab className="w-[158px] pl-[4px]">Documentos Fiscais Eletrônicos</Tab>
            <Tab active className="w-[91px]">MDFe's Geradas</Tab>
          </div>
          <Page className="ml-[3px] w-[980px] h-[572px] shrink-0 flex flex-col">
            <div className="h-[24px] shrink-0 flex items-end pl-[5px] -mb-px">
              <Tab className="w-[91px] pl-[4px]">MDF-e's Geradas</Tab>
              <Tab active className="w-[100px]">Entrada de Dados</Tab>
            </div>
            <Page className="ml-[3px] w-[972px] h-[543px] shrink-0 flex flex-col">
              {/* row A */}
              <div className="ml-[4px] flex gap-[2px]">
                <Group legend="Identificação" className="w-[237px] h-[61px]">
                  <div className="flex pl-[5px] pt-[3px]">
                    <Field gap="mb-[4px]" label="ID" off className="w-[59px]">742992268</Field>
                    <Field gap="mb-[4px]" label="Cód. Filial" off className="ml-[4px] w-[52px]">100</Field>
                    <Field gap="mb-[4px]" label="Série" off className="ml-[5px] w-[35px]">001</Field>
                    <Field gap="mb-[4px]" label="Núm. Docto" off right className="ml-[3px] w-[65px]">16</Field>
                  </div>
                </Group>
                <Group legend="Lote MDF-e" className="w-[115px] h-[61px]">
                  <div className="flex pl-[5px] pt-[3px]">
                    <Field gap="mb-[4px]" label="Série" off className="w-[33px]"> </Field>
                    <Field gap="mb-[4px]" label="Número" off className="ml-[5px] w-[65px]"> </Field>
                  </div>
                </Group>
                <Group legend="Status" legendClass="ml-[8px]" className="w-[130px] h-[61px]">
                  <div className="pl-[7px] pt-[3px] flex flex-col">
                    <Lab className="mb-[4px]">Status</Lab>
                    <div className={`w-[115px] h-[20px] flex items-center pl-[1px] pr-[1px] bg-white ${sunk}`}>
                      <span className="flex-1 h-[15px] leading-[15px] bg-[#0078d7] text-white pl-[1px]">FECHADO</span>
                      <Tri />
                    </div>
                  </div>
                </Group>
                <Group legend="Chave de Acesso" legendClass="ml-[5px]" className="w-[350px] h-[61px]">
                  <div className="pl-[4px] pt-[3px] flex flex-col">
                    <Lab className="mb-[4px]">Chave de Acesso</Lab>
                    <Inp off className="w-[338px] pl-[8px] tracking-[2.3px] text-[#222]">- - . . / - - - - . . . . - . . . -</Inp>
                  </div>
                </Group>
                <Group legend="Status MDFe" className="w-[122px] h-[61px]">
                  <div className="pl-[3px] pt-[3px] flex flex-col">
                    <Lab className="mb-[4px]">Status MDFe</Lab>
                    <div className={`w-[114px] h-[20px] flex items-center pl-[2px] pr-[1px] bg-[#f0f0f0] text-[#666] ${sunk}`}>
                      <span className="flex-1">Não Enviado</span>
                      <Tri off />
                    </div>
                  </div>
                </Group>
              </div>
              {/* row B */}
              <Group legend="Dados MDF-e" className="ml-[4px] w-[963px] h-[62px]">
                <div className="flex gap-[6px] pl-[5px] pt-[3px]">
                  <Field gap="mb-[3px]" label="Valor Total" right className="w-[98px]">937,50</Field>
                  <Field gap="mb-[3px]" label="Peso Total" right className="w-[98px]">25,000</Field>
                  <Field gap="mb-[3px]" label="UFs do percurso  na ordem origem/destino" off className="w-[221px]"> </Field>
                  <Field gap="mb-[3px]" label="UF" off className="w-[38px]">RS</Field>
                  <Field gap="mb-[3px]" label="Cód. Agendamento no Porto" className="w-[277px]"> </Field>
                  <Field gap="mb-[3px]" label="Data/hora previstos de inicio da viagem" className="w-[191px]"> </Field>
                </div>
              </Group>

              {/* sub tabs */}
              <div className="mt-[16px] h-[21px] shrink-0 flex items-end pl-[5px] -mb-px">
                <Tab className="w-[98px] pl-[4px]">Dados Transporte</Tab>
                <Tab className="w-[92px] pl-[4px]">Seguro / Pédagio</Tab>
                <Tab active className="w-[122px]">Produto Predominante</Tab>
                <Tab className="w-[141px] pl-[3px]">Informações de Pagamento</Tab>
              </div>
              <Page className="ml-[3px] w-[963px] h-[354px] shrink-0 flex flex-col">
                <Group legend="Informações do Produto Predominante" className="ml-[2px] mt-[1px] w-[956px] h-[89px]">
                  <div className="flex pl-[11px] pt-[15px]">
                    <Field gap="mb-[2px]" label="Descrição do Produto Predominante" className="w-[461px]">PICANHA CLEISON</Field>
                    <Dots className="ml-[8px]" />
                    <div className="ml-[15px] w-[156px] shrink-0 flex flex-col">
                      <Lab className="mb-[2px]">Tipo Carga</Lab>
                      <div className={`h-[20px] flex items-center pl-[1px] pr-[1px] bg-white ${sunk}`}>
                        <span className="flex-1">03-Frigorificada</span>
                        <Tri />
                      </div>
                    </div>
                    <Field gap="mb-[2px]" label="cEAN" className="ml-[19px] w-[125px]"> </Field>
                    <Field gap="mb-[2px]" label="NCM" className="ml-[11px] w-[109px]">02102000</Field>
                  </div>
                </Group>
                <Group legend="Informações de Lotação" className="ml-[2px] w-[956px] h-[258px]">
                  <div className="flex pl-[2px] pt-[2px]">
                    <Group legend="Carregamento" className="w-[495px] h-[240px]">
                      <div className="pl-[10px] pt-[31px] flex flex-col">
                        <div className="flex">
                          <Field label="CEP" className="w-[100px]">87.045-360</Field>
                          <Dots className="ml-[10px]" />
                        </div>
                        <div className="flex mt-[6px]">
                          <Field gap="mb-[2px]" label="Latitude" off className="w-[188px]"> </Field>
                          <Field gap="mb-[2px]" label="Logitude" off className="ml-[12px] w-[214px]"> </Field>
                          <Dots off className="ml-[8px]" />
                        </div>
                      </div>
                    </Group>
                    <Group legend="Descarregamento" className="w-[456px] h-[240px]">
                      <div className="pl-[10px] pt-[31px] flex flex-col">
                        <div className="flex">
                          <Field label="CEP" className="w-[100px]">87.103-276</Field>
                          <Dots className="ml-[10px]" />
                        </div>
                        <div className="flex mt-[6px]">
                          <Field gap="mb-[2px]" label="Latitude" off className="w-[188px]"> </Field>
                          <Field gap="mb-[2px]" label="Logitude" off className="ml-[11px] w-[189px]"> </Field>
                          <Dots off className="ml-[10px]" />
                        </div>
                      </div>
                    </Group>
                  </div>
                </Group>
              </Page>
              {/* buttons */}
              <div className="mt-[1px] ml-[4px] flex items-start text-[11.5px] tracking-[-0.2px]">
                <div className={`w-[75px] h-[25px] flex items-center justify-center gap-[4px] ${raised}`}>
                  <S className="w-[15px] h-[15px]"><path d="M0 1.500a1 1 0 0 1 1-1h14v14a1 1 0 0 1-1 1H1a1 1 0 0 1-1-1z" fill="#000" /><rect x="3" y="1" width="10" height="6" fill="#fff" /><rect x="3" y="1" width="10" height="1" fill="#e02020" /><rect x="4" y="10" width="8" height="5" fill="#fff" /><rect x="9" y="11" width="2" height="3" fill="#000" /></S>
                  <span><U>S</U>alvar</span>
                </div>
                <div className={`ml-[6px] w-[75px] h-[25px] flex items-center justify-center gap-[4px] ${raised}`}>
                  <UndoIco className="w-[13px] h-[13px]" />
                  <span><U>C</U>ancelar</span>
                </div>
                <div className={`ml-[4px] w-[75px] h-[25px] flex items-center justify-center gap-[3px] ${raised}`}>
                  <S className="w-[14px] h-[14px]"><path d="M1 1l12 12M13 1L1 13" stroke="#e81010" strokeWidth="1.800" transform="translate(.5 .5)" /></S>
                  <span><U>E</U>xcluir</span>
                </div>
                <div className={`ml-[36px] w-[56px] h-[25px] flex items-center justify-center ${raised}`}><NavIco d="M1 0h2v10H1zM11 0v10L4 5z" /></div>
                <div className={`w-[56px] h-[25px] flex items-center justify-center ${raised}`}><NavIco d="M9 0v10L2 5z" /></div>
                <div className={`w-[56px] h-[25px] flex items-center justify-center ${raised}`}><NavIco d="M3 0v10l7-5z" /></div>
                <div className={`w-[56px] h-[25px] flex items-center justify-center ${raised}`}><NavIco d="M1 0v10l7-5zM9 0h2v10H9z" /></div>
              </div>
            </Page>
          </Page>
        </Page>
        {/* dialog status */}
        <div className="flex-1 flex items-center pt-[1px] gap-[2px] text-[11.5px] tracking-[-0.1px]">
          <div className="w-[60px] h-[17px] flex items-center pl-[1px] pt-[2px] border-t border-l border-t-[#a8a8a8] border-l-[#a8a8a8] text-[#222]">MOV020</div>
          <div className="w-[118px] h-[17px] flex items-center pl-[1px] pt-[2px] border-t border-l border-t-[#a8a8a8] border-l-[#a8a8a8] text-[#222]">Editando registro</div>
          <div className="flex-1 h-[17px] border-t border-l border-t-[#a8a8a8] border-l-[#a8a8a8]" />
        </div>
      </div>

      {/* annotations drawn over the picture */}
      <div className="absolute left-[701px] top-[147px] w-[62px] h-[38px] border-4 border-[#ff0000] rounded-[2px]" />
      <div className="absolute left-[677px] top-[246px] w-[133px] h-[68px] border-4 border-[#ff0000] rounded-[2px]" />
      <svg viewBox="0 0 20 50" className="absolute left-[738px] top-[190px] w-[20px] h-[50px]">
        <path d="M9 2 L17 25 L14 24 L15 47 L12 47 L7 24 L1 26 Z" fill="#ff0000" />
      </svg>
      <div className="absolute left-[772px] top-[194px] text-[#ff0000] text-[28px] tracking-[-0.2px] leading-[38px] whitespace-nowrap">colocar status fechado e atualizar</div>
    </div>
  );
}
